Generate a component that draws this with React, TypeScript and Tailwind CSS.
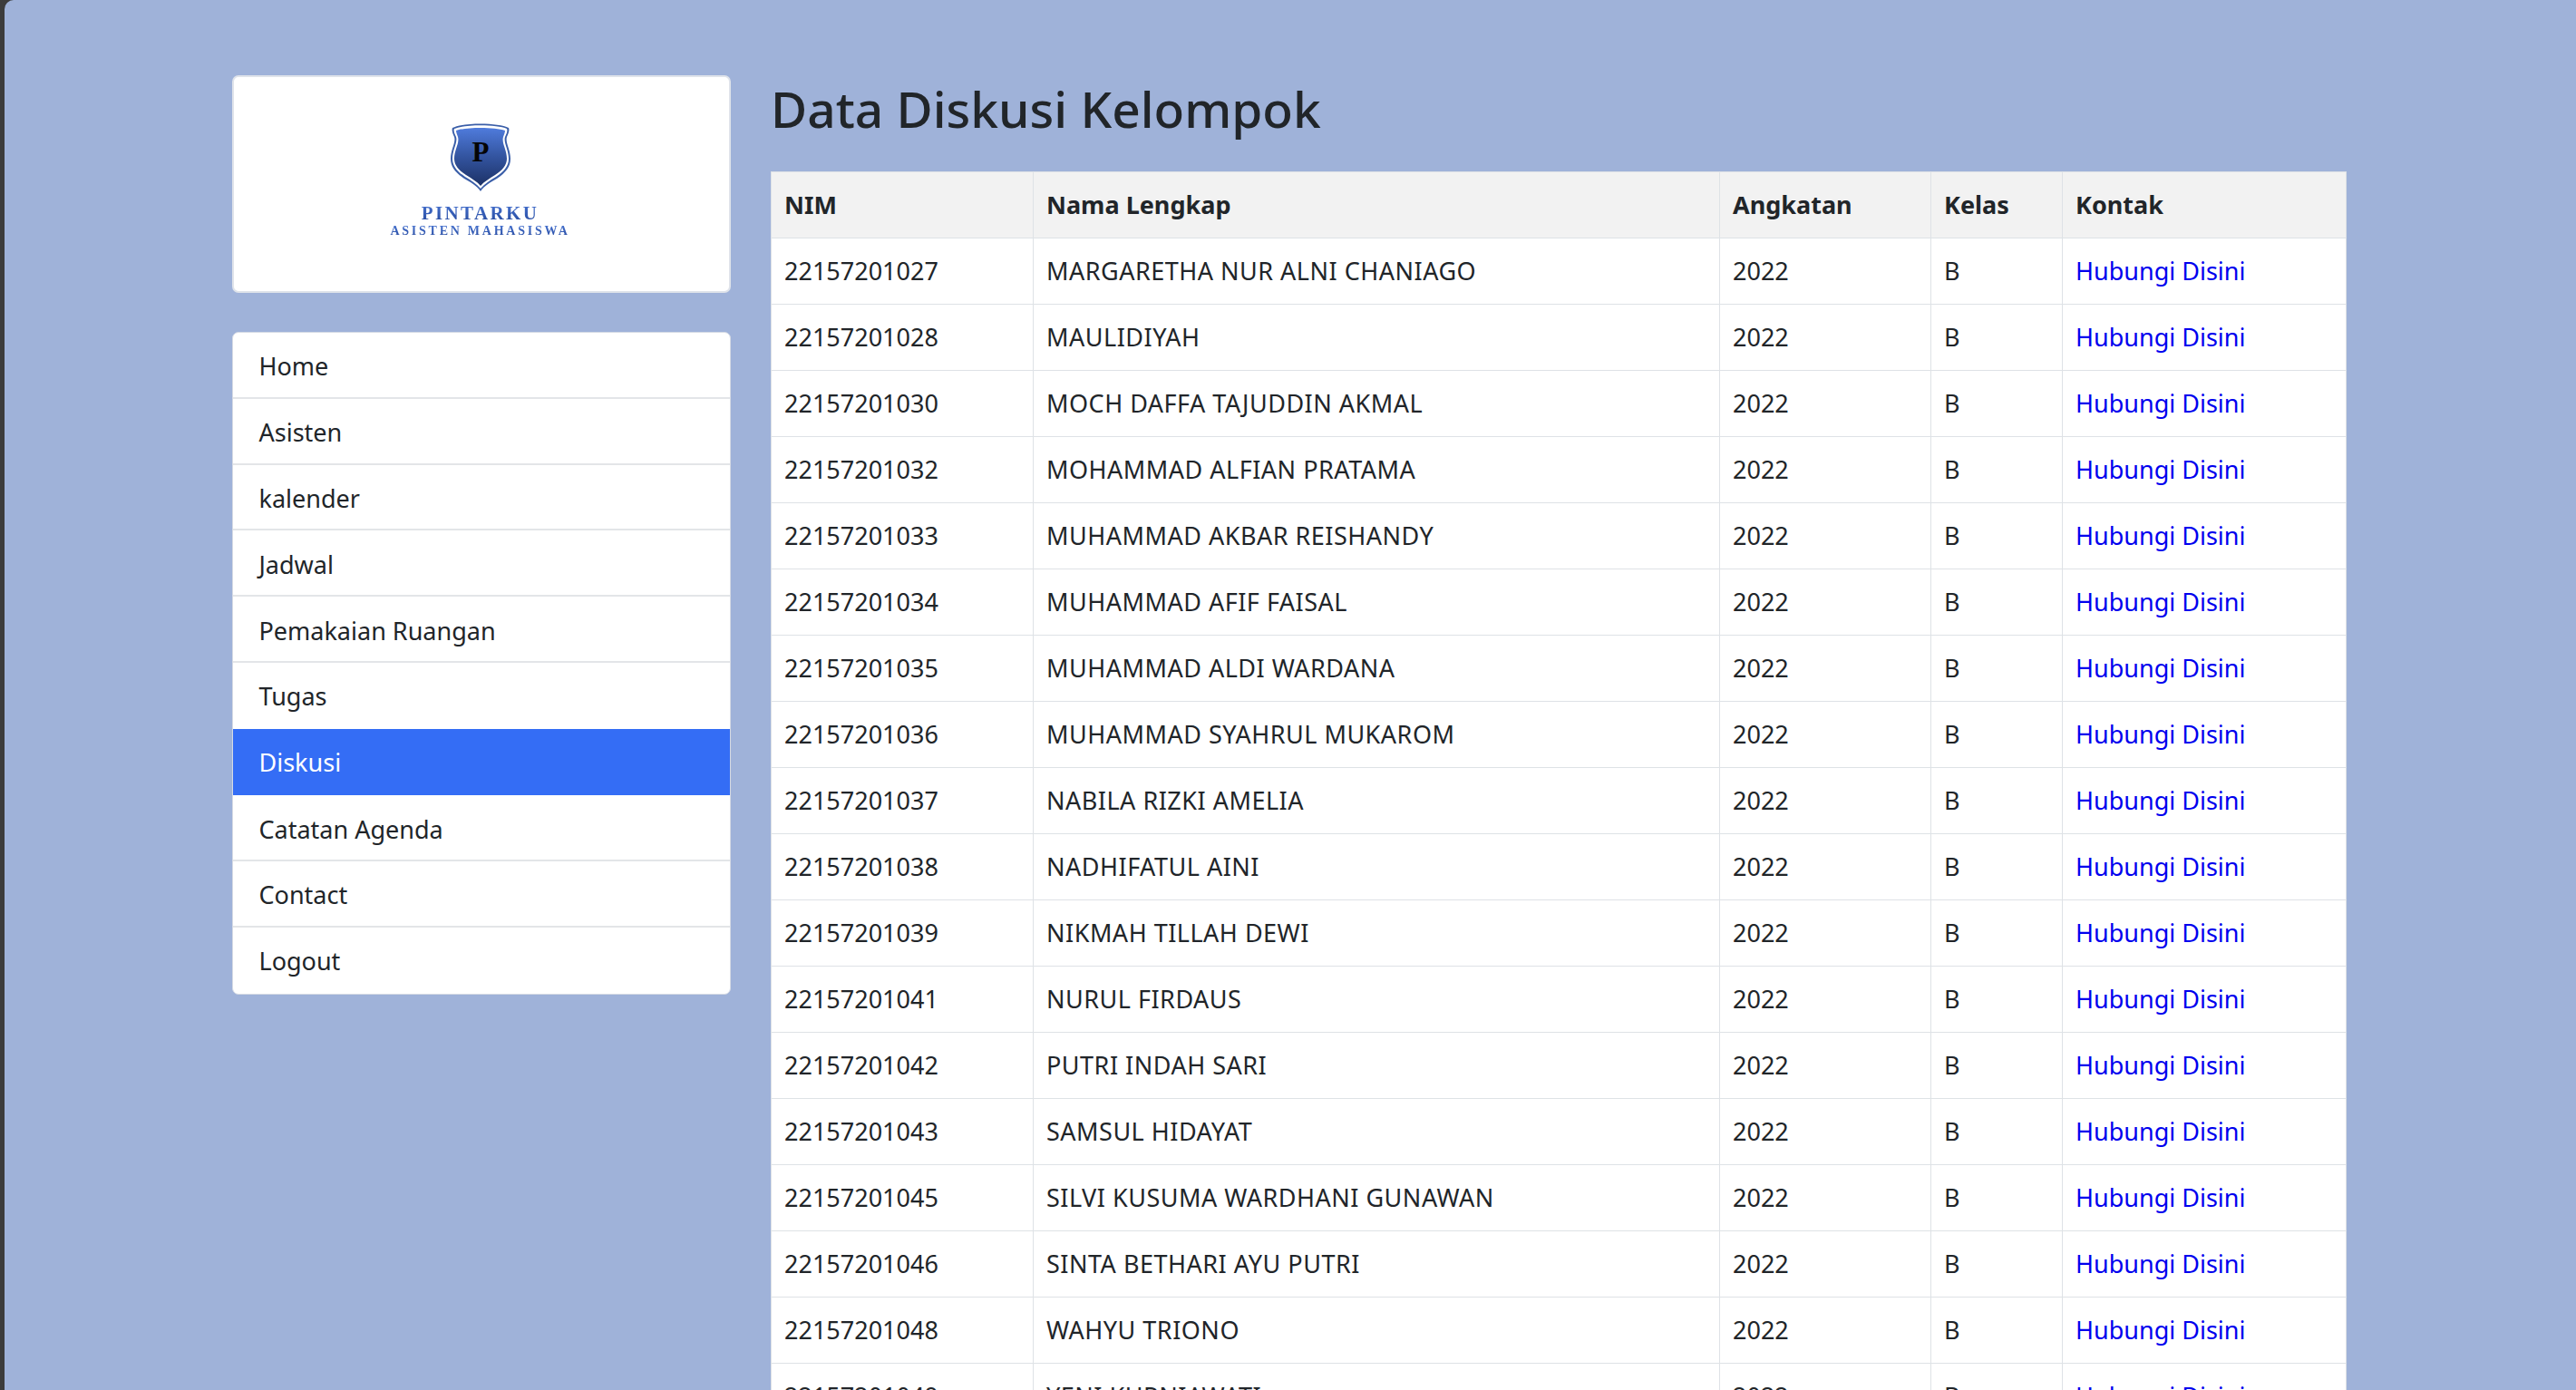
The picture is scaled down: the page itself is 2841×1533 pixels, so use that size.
const menu = ["Home", "Asisten", "kalender", "Jadwal", "Pemakaian Ruangan", "Tugas", "Diskusi", "Catatan Agenda", "Contact", "Logout"];

const rows: [string, string][] = [
  ["22157201027", "MARGARETHA NUR ALNI CHANIAGO"],
  ["22157201028", "MAULIDIYAH"],
  ["22157201030", "MOCH DAFFA TAJUDDIN AKMAL"],
  ["22157201032", "MOHAMMAD ALFIAN PRATAMA"],
  ["22157201033", "MUHAMMAD AKBAR REISHANDY"],
  ["22157201034", "MUHAMMAD AFIF FAISAL"],
  ["22157201035", "MUHAMMAD ALDI WARDANA"],
  ["22157201036", "MUHAMMAD SYAHRUL MUKAROM"],
  ["22157201037", "NABILA RIZKI AMELIA"],
  ["22157201038", "NADHIFATUL AINI"],
  ["22157201039", "NIKMAH TILLAH DEWI"],
  ["22157201041", "NURUL FIRDAUS"],
  ["22157201042", "PUTRI INDAH SARI"],
  ["22157201043", "SAMSUL HIDAYAT"],
  ["22157201045", "SILVI KUSUMA WARDHANI GUNAWAN"],
  ["22157201046", "SINTA BETHARI AYU PUTRI"],
  ["22157201048", "WAHYU TRIONO"],
  ["22157201049", "YENI KURNIAWATI"],
];

function Logo() {
  return (
    <div className="flex flex-col items-center pr-[3px]">
      <svg width="68" height="78" viewBox="0 0 68 78" className="mt-[49px]">
        <defs>
          <linearGradient id="sh" x1="0" y1="0" x2="0" y2="1">
            <stop offset="0" stopColor="#4f7bdc" />
            <stop offset="0.5" stopColor="#33549f" />
            <stop offset="1" stopColor="#1c3166" />
          </linearGradient>
        </defs>
        <path d="M3 7C14 1 54 1 65 7C66 9 65 13 63 17C61 23 67 31 67 41C67 50 62 56 52 63C45 67 38 71 34 77C30 71 23 67 16 63C6 56 1 50 1 41C1 31 7 23 5 17C3 13 2 9 3 7Z" fill="#3a5ea8" />
        <path d="M5 8C16 3 52 3 63 8C64 10 63 13 61 17C59 23 65 31 65 41C65 49 60 55 51 61C44 65 38 69 34 74C30 69 24 65 17 61C8 55 3 49 3 41C3 31 9 23 7 17C5 13 4 10 5 8Z" fill="#ffffff" />
        <path d="M7 10C18 6 50 6 61 10C61 12 60 14 59 17C57 24 63 31 63 41C63 48 58 54 50 59C44 63 38 66 34 71C30 66 24 63 18 59C10 54 5 48 5 41C5 31 11 24 9 17C8 14 7 12 7 10Z" fill="url(#sh)" />
        <text x="34" y="44" textAnchor="middle" fontFamily="'Liberation Serif', serif" fontWeight="700" fontSize="31" fill="#050505">P</text>
      </svg>
      <div className="mt-[11px] bg-linear-to-b from-[#4a76d4] to-[#24479b] bg-clip-text font-['Liberation_Serif',serif] text-[21px] leading-[24px] font-bold tracking-[2.4px] whitespace-nowrap text-transparent">PINTARKU</div>
      <div className="mt-[0px] bg-linear-to-b from-[#4a76d4] to-[#24479b] bg-clip-text font-['Liberation_Serif',serif] text-[14px] leading-[16px] font-bold tracking-[2.75px] whitespace-nowrap text-transparent">ASISTEN MAHASISWA</div>
    </div>
  );
}

const cell = "border border-[#dee2e6] px-[14px] py-[14.4px] text-left leading-[43.2px] h-[73px] whitespace-nowrap overflow-hidden";

export default function App() {
  return (
    <div className="h-screen overflow-hidden bg-[#3c3c3c] pl-[5px] font-['Noto_Sans',sans-serif] text-[27px] text-[#212529]">
      <div className="flex h-full items-start gap-[44px] rounded-tl-[10px] bg-[#9fb2d9] pl-[251px] pt-[83px]">
        <aside className="flex w-[550px] shrink-0 flex-col gap-[43px]">
          <div className="h-[240px] rounded-[7px] border-2 border-[#dfe3ea] bg-white">
            <Logo />
          </div>
          <nav className="flex flex-col overflow-hidden rounded-[7px] border border-[#d5dae4] bg-white">
            {menu.map((m, i) => (
              <a
                key={m}
                className={
                  m === "Diskusi"
                    ? "-mx-px h-[73.4px] bg-[#346df5] px-[29.5px] pt-[15.4px] pb-[13.4px] leading-[43.2px] text-white"
                    : `h-[72.8px] px-[28.5px] pt-[15.4px] pb-[12.4px] leading-[43.2px] ${i < menu.length - 1 && menu[i + 1] !== "Diskusi" ? "border-b-2 border-[#e3e5e8]" : ""}`
                }
              >
                {m}
              </a>
            ))}
          </nav>
        </aside>
        <main className="w-[1737px] shrink-0">
          <h1 className="h-[106px] text-[55px] font-medium leading-[73px] whitespace-nowrap">Data Diskusi Kelompok</h1>
          <table className="w-full table-fixed border-collapse bg-white">
            <colgroup>
              <col className="w-[289px]" />
              <col className="w-[757px]" />
              <col className="w-[233px]" />
              <col className="w-[145px]" />
              <col className="w-[313px]" />
            </colgroup>
            <thead>
              <tr className="bg-[#f2f2f2]">
                {["NIM", "Nama Lengkap", "Angkatan", "Kelas", "Kontak"].map((h) => (
                  <th key={h} className={`${cell} font-bold`}>{h}</th>
                ))}
              </tr>
            </thead>
            <tbody>
              {rows.map(([nim, name]) => (
                <tr key={nim}>
                  <td className={cell}>{nim}</td>
                  <td className={`${cell} tracking-[0.5px]`}>{name}</td>
                  <td className={cell}>2022</td>
                  <td className={cell}>B</td>
                  <td className={cell}><a className="text-[#0000ee]">Hubungi Disini</a></td>
                </tr>
              ))}
            </tbody>
          </table>
        </main>
      </div>
    </div>
  );
}
